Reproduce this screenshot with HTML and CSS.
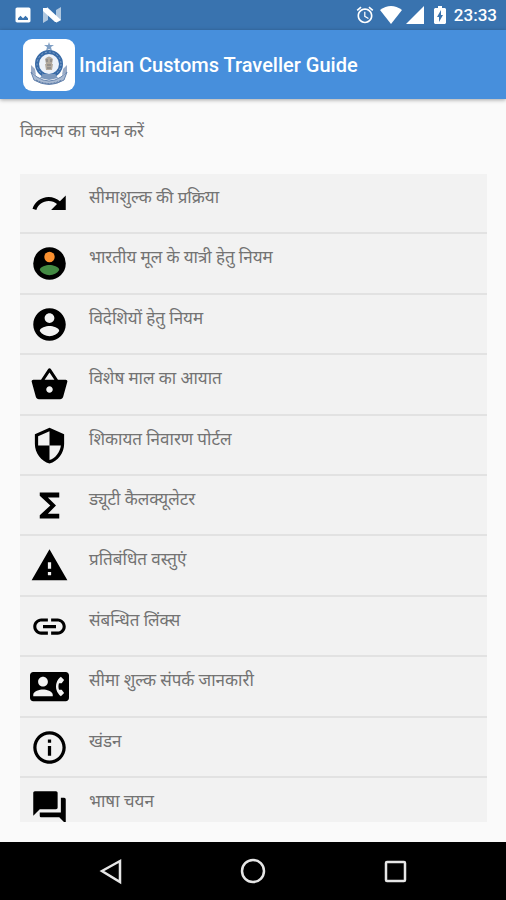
FILE: index.html
```
<!DOCTYPE html>
<html lang="hi">
<head>
    <meta charset="UTF-8">
    <meta name="viewport" content="width=device-width, initial-scale=1">
    <title>Indian Customs Traveller Guide</title>
    <link rel="stylesheet" href="styles.css">
</head>
<body>

    <div class="statusbar">
        <svg class="status-icon" viewBox="0 0 24 24"><path d="M21 19V5c0-1.100-.9-2-2-2H5c-1.100 0-2 .9-2 2v14c0 1.100.9 2 2 2h14c1.100 0 2-.9 2-2zM6 18v-2l3-3 3 3 3-3 3 3v2z"/></svg>
        <svg class="status-icon n-icon" viewBox="0 0 20 18"><path opacity=".6" d="M1 4l5-3v13l-5 3zM14 4l5-3v13l-5 3z"/><path d="M1 2h5l13 12-4 2h-2L1 5z"/></svg>
        <div class="status-right">
            <svg class="status-icon" viewBox="0 0 24 24"><path d="M22 5.720l-4.600-3.860-1.290 1.530 4.600 3.860L22 5.720zM7.880 3.390L6.600 1.860 2 5.710l1.290 1.530 4.590-3.850zM12.500 8H11v6l4.750 2.850.75-1.230-4-2.370V8zM12 4c-4.970 0-9 4.030-9 9s4.020 9 9 9c4.970 0 9-4.030 9-9s-4.030-9-9-9zm0 16c-3.870 0-7-3.130-7-7s3.130-7 7-7 7 3.130 7 7-3.130 7-7 7z"/></svg>
            <svg class="status-icon wifi" viewBox="0 0 22 18"><path d="M0 4Q11-4 22 4L11 18z"/></svg>
            <svg class="status-icon signal" viewBox="0 0 18 18"><path d="M0 18L18 0v18z"/></svg>
            <svg class="status-icon battery" viewBox="0 0 12 18"><path fill-rule="evenodd" d="M4 0h4v2h3l1 1v14l-1 1H1l-1-1V3l1-1h3zM7 4l-4 7h2v5l4-7H7z"/></svg>
            <span class="clock">23:33</span>
        </div>
    </div>

    <header class="toolbar">
        <svg class="logo" viewBox="0 0 52 52">
            <rect width="52" height="52" rx="9" fill="#fff"/>
            <path d="M26 3l1 3h4l-3 2 1 4-3-2-3 2 1-4-3-2h4z" fill="#7f9fc4"/>
            <path d="M8 26l4 4 1 6-5-3zM44 26l-4 4-1 6 5-3z" fill="#9aabc6"/>
            <path d="M8 33l3 8q15 9 30 0l3-8-6 5q-12 8-24 0z" fill="#a9bad2" stroke="#6583ad"/>
            <path d="M13 41q13 7 26 0" fill="none" stroke="#5273a2" stroke-dasharray="2 1"/>
            <circle cx="26" cy="25" r="12" fill="#edf2f9" stroke="#396ba7" stroke-width="4"/>
            <circle cx="26" cy="25" r="12" fill="none" stroke="#85a6cc" stroke-dasharray="2 2"/>
            <path d="M22 20q4-5 8 0l-1 5h1l-1 6h-6l-1-6h1z" fill="#b2a99d"/>
            <path d="M24 20v3m4-3v3m-4 3h4m-4 3h4" stroke="#74777c"/>
            <path d="M17 39l3-4h12l3 4-9 2z" fill="#7b98bd"/>
        </svg>
        <h1 class="title">Indian Customs Traveller Guide</h1>
    </header>

    <main class="content">
        <h2 class="prompt">विकल्प का चयन करें</h2>
        <nav class="menu">
            <a class="item" href="#process">
                <svg class="icon" viewBox="0 0 24 24"><path d="M18.400 10.600C16.550 8.990 14.150 8 11.500 8c-4.650 0-8.580 3.030-9.960 7.220L3.900 16c1.050-3.190 4.050-5.500 7.600-5.500 1.950 0 3.730.72 5.120 1.880L13 16h9V7l-3.600 3.600z"/></svg>
                <span class="label">सीमाशुल्क की प्रक्रिया</span>
            </a>
            <a class="item" href="#indian">
                <svg class="icon" viewBox="0 0 24 24"><circle cx="12" cy="12" r="10"/><circle cx="12" cy="8" r="3.200" fill="#fb9130"/><path fill="#438a43" d="M12 19.200c-2.500 0-4.710-1.280-6-3.220.03-1.990 4-3.080 6-3.080 1.990 0 5.970 1.090 6 3.080-1.290 1.940-3.500 3.220-6 3.220z"/></svg>
                <span class="label">भारतीय मूल के यात्री हेतु नियम</span>
            </a>
            <a class="item" href="#foreign">
                <svg class="icon" viewBox="0 0 24 24"><path d="M12 2C6.480 2 2 6.480 2 12s4.480 10 10 10 10-4.480 10-10S17.520 2 12 2zm0 3c1.660 0 3 1.340 3 3s-1.340 3-3 3-3-1.340-3-3 1.340-3 3-3zm0 14.200c-2.500 0-4.710-1.280-6-3.220.03-1.990 4-3.080 6-3.080 1.990 0 5.970 1.090 6 3.080-1.290 1.940-3.500 3.220-6 3.220z"/></svg>
                <span class="label">विदेशियों हेतु नियम</span>
            </a>
            <a class="item" href="#import">
                <svg class="icon" viewBox="0 0 24 24"><path d="M17.210 9l-4.380-6.560c-.19-.28-.51-.42-.83-.42-.32 0-.64.14-.83.43L6.790 9H2c-.55 0-1 .45-1 1 0 .09.010.18.040.27l2.540 9.270c.23.84 1 1.460 1.920 1.460h13c.92 0 1.690-.62 1.930-1.460l2.540-9.270L23 10c0-.55-.45-1-1-1h-4.790zM9 9l3-4.400L15 9H9zm3 8c-1.100 0-2-.9-2-2s.9-2 2-2 2 .9 2 2-.9 2-2 2z"/></svg>
                <span class="label">विशेष माल का आयात</span>
            </a>
            <a class="item" href="#grievance">
                <svg class="icon" viewBox="0 0 24 24"><path d="M12 1L3 5v6c0 5.550 3.840 10.740 9 12 5.160-1.260 9-6.450 9-12V5l-9-4zm0 10.990h7c-.53 4.120-3.280 7.790-7 8.940V12H5V6.300l7-3.110v8.800z"/></svg>
                <span class="label">शिकायत निवारण पोर्टल</span>
            </a>
            <a class="item" href="#calculator">
                <svg class="icon" viewBox="0 0 24 24"><path d="M18 4H6v2l6.500 6L6 18v2h12v-3h-7l5-5-5-5h7z"/></svg>
                <span class="label">ड्यूटी कैलक्यूलेटर</span>
            </a>
            <a class="item" href="#prohibited">
                <svg class="icon" viewBox="0 0 24 24"><path d="M1 21h22L12 2 1 21zm12-3h-2v-2h2v2zm0-4h-2v-4h2v4z"/></svg>
                <span class="label">प्रतिबंधित वस्तुएं</span>
            </a>
            <a class="item" href="#links">
                <svg class="icon" viewBox="0 0 24 24"><path d="M3.900 12c0-1.710 1.390-3.100 3.100-3.100h4V7H7c-2.760 0-5 2.240-5 5s2.240 5 5 5h4v-1.900H7c-1.710 0-3.100-1.390-3.100-3.100zM8 13h8v-2H8v2zm9-6h-4v1.900h4c1.710 0 3.100 1.390 3.100 3.100s-1.390 3.100-3.100 3.100h-4V17h4c2.760 0 5-2.240 5-5s-2.240-5-5-5z"/></svg>
                <span class="label">संबन्धित लिंक्स</span>
            </a>
            <a class="item" href="#contact">
                <svg class="icon" viewBox="0 0 24 24"><path d="M22 3H2C.9 3 0 3.900 0 5v14c0 1.100.9 2 2 2h20c1.100 0 1.990-.9 1.990-2L24 5c0-1.100-.9-2-2-2zM8 6c1.660 0 3 1.340 3 3s-1.340 3-3 3-3-1.340-3-3 1.340-3 3-3zm6 12H2v-1c0-2 4-3.100 6-3.100s6 1.100 6 3.100v1zm3.850-4h1.640L21 16l-1.990 1.990c-1.310-.98-2.280-2.380-2.730-3.990-.18-.64-.28-1.310-.28-2s.1-1.360.28-2c.45-1.620 1.420-3.010 2.730-3.990L21 8l-1.510 2h-1.640c-.22.630-.35 1.300-.35 2s.13 1.370.35 2z"/></svg>
                <span class="label">सीमा शुल्क संपर्क जानकारी</span>
            </a>
            <a class="item" href="#disclaimer">
                <svg class="icon" viewBox="0 0 24 24"><path d="M11 17h2v-6h-2v6zm1-15C6.480 2 2 6.480 2 12s4.480 10 10 10 10-4.480 10-10S17.520 2 12 2zm0 18c-4.410 0-8-3.590-8-8s3.590-8 8-8 8 3.590 8 8-3.590 8-8 8zM11 9h2V7h-2v2z"/></svg>
                <span class="label">खंडन</span>
            </a>
            <a class="item last" href="#language">
                <svg class="icon" viewBox="0 0 24 24"><path d="M21 6h-2v9H6v2c0 .55.45 1 1 1h11l4 4V7c0-.55-.45-1-1-1zm-4 6V3c0-.55-.45-1-1-1H3c-.55 0-1 .45-1 1v14l4-4h10c.55 0 1-.45 1-1z"/></svg>
                <span class="label">भाषा चयन</span>
            </a>
        </nav>
    </main>

    <div class="navbar">
        <button class="key" type="button" aria-label="Back"><svg viewBox="0 0 24 24"><path d="M21 2v21L3 12z"/></svg></button>
        <button class="key" type="button" aria-label="Home"><svg viewBox="0 0 24 24"><circle cx="12" cy="12" r="11"/></svg></button>
        <button class="key" type="button" aria-label="Recents"><svg viewBox="0 0 24 24"><rect x="3" y="3" width="19" height="19" rx="1"/></svg></button>
    </div>

</body>
</html>
```
FILE: styles.css
```
html,body,h1,h2{margin: 0; padding: 0;}
body {
    display: flex;
    flex-direction: column;
    min-height: 100vh;
    background: #fafafa;
    color: #737373;
    font-family: Roboto, "Noto Sans", "Noto Sans Devanagari", sans-serif;
}

/* status bar */
.statusbar {
    display: flex;
    align-items: center;
    gap: 8px;
    height: 30px;
    padding: 0 9px 0 12px;
    background: #3973af;
    color: #fff;
}
.status-right {
    display: flex;
    align-items: center;
    gap: 4px;
    margin-left: auto;
}
.status-icon {
    width: 22px;
    height: 20px;
    fill: #fff;
}
.n-icon{width: 20px; height: 18px;}
.wifi{height: 18px;}
.signal{width: 18px; height: 18px;}
.battery{width: 12px; height: 18px; margin: 0 4px 0 6px;}
.clock{font-size: 17px; font-weight: 500; line-height: 30px;}

.toolbar {
    display: flex;
    align-items: center;
    gap: 4px;
    height: 69px;
    padding: 0 23px;
    background: #478fdc;
    color: #fff;
    box-shadow: 0 1px 4px rgba(0,0,0,.35);
}
.logo{width: 52px; height: 52px;}
.title{font-size: 20px; font-weight: 500; line-height: 28px;}

.content {
    display: flex;
    flex: 1;
    flex-direction: column;
    padding: 19px 19px 20px 20px;
}
.prompt {
    margin-bottom: 30px;
    font-size: 17px;
    font-weight: 400;
    line-height: 26px;
}

/* option list */
.menu {
    display: flex;
    flex: 1;
    flex-direction: column;
    background: #f2f2f2;
}
.item {
    box-sizing: border-box;
    display: flex;
    flex: 1;
    align-items: flex-start;
    gap: 20px;
    padding: 10px 10px 0;
    border-bottom: 2px solid #e2e2e2;
    color: inherit;
    text-decoration: none;
}
.last {
    flex: none;
    height: 44px;
    border-bottom: 0;
    overflow: hidden;
}
.icon {
    flex: none;
    width: 39px;
    height: 39px;
    fill: #000;
}
.label{font-size: 17px; line-height: 26px;}

/* navigation keys */
.navbar {
    display: flex;
    justify-content: center;
    gap: 94px;
    height: 58px;
    background: #000;
}
.key {
    display: flex;
    align-items: center;
    justify-content: center;
    width: 48px;
    padding: 0;
    border: 0;
    background: none;
}
.key svg {
    width: 24px;
    height: 24px;
    fill: none;
    stroke: #e6e6e6;
    stroke-width: 2.500;
    overflow: visible;
}
```
